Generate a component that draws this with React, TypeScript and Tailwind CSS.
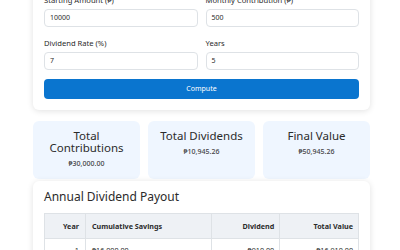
const inputs = [
  { label: "Starting Amount (₱)", value: "10000" },
  { label: "Monthly Contribution (₱)", value: "500" },
  { label: "Dividend Rate (%)", value: "7" },
  { label: "Years", value: "5" },
];

const summary = [
  { title: "Total Contributions", value: "₱30,000.00" },
  { title: "Total Dividends", value: "₱10,945.26" },
  { title: "Final Value", value: "₱50,945.26" },
];

const rows = [
  { year: 1, savings: "₱16,000.00", dividend: "₱910.00", total: "₱16,910.00" },
  { year: 2, savings: "₱22,910.00", dividend: "₱1,393.70", total: "₱24,303.70" },
];

export default function App() {
  return (
    <div
      className="h-[250px] w-[400px] overflow-hidden bg-white text-[#2b2b2b]"
      style={{ fontFamily: '"Noto Sans", "DejaVu Sans", sans-serif' }}
    >
      <div className="ml-[33px] mt-[-19px] flex w-[337px] flex-col">
        {/* Form card */}
        <div className="rounded-md bg-white p-[11px] shadow-[0_1px_6px_rgba(0,0,0,0.12)]">
          <div className="grid grid-cols-2 gap-x-2 gap-y-2">
            {inputs.map((f) => (
              <div key={f.label} className="flex flex-col">
                <label className="h-4 text-[7.6px] leading-4">{f.label}</label>
                <div className="mt-[1px] flex h-[18px] items-center rounded border border-[#dee2e6] px-[5px] text-[7px]">
                  {f.value}
                </div>
              </div>
            ))}
          </div>
          <button className="mt-[9px] h-5 w-full rounded bg-[#0a75cf] text-[7px] text-white">
            Compute
          </button>
        </div>

        {/* Summary cards */}
        <div className="mt-[11px] grid grid-cols-3 gap-2">
          {summary.map((s) => (
            <div
              key={s.title}
              className="rounded-md bg-[#eff6ff] px-2 pb-[10px] pt-[9px] text-center"
            >
              <div className="text-[11.5px] leading-[12px]">{s.title}</div>
              <div className="mt-[5px] text-[7px] leading-[10px] font-medium text-[#444]">
                {s.value}
              </div>
            </div>
          ))}
        </div>

        {/* Annual table */}
        <div className="mt-[2px] rounded-md bg-white px-[11px] pb-[11px] pt-2 shadow-[0_1px_6px_rgba(0,0,0,0.12)]">
          <h2 className="text-[12px] leading-4">Annual Dividend Payout</h2>
          <table className="mt-2 w-[315px] border-collapse text-[7.2px]">
            <thead>
              <tr className="h-[25px] bg-[#eef1f5] font-bold">
                <th className="w-[41px] border border-[#dee2e6] px-[6px] text-right">Year</th>
                <th className="w-[127px] border border-[#dee2e6] px-[6px] text-left">
                  Cumulative Savings
                </th>
                <th className="w-[68px] border border-[#dee2e6] px-[5px] text-right">Dividend</th>
                <th className="w-[79px] border border-[#dee2e6] px-[5px] text-right">Total Value</th>
              </tr>
            </thead>
            <tbody>
              {rows.map((r) => (
                <tr key={r.year} className="h-[24px]">
                  <td className="border border-[#dee2e6] px-[6px] text-right">{r.year}</td>
                  <td className="border border-[#dee2e6] px-[6px]">{r.savings}</td>
                  <td className="border border-[#dee2e6] px-[5px] text-right">{r.dividend}</td>
                  <td className="border border-[#dee2e6] px-[5px] text-right">{r.total}</td>
                </tr>
              ))}
            </tbody>
          </table>
        </div>
      </div>
    </div>
  );
}
